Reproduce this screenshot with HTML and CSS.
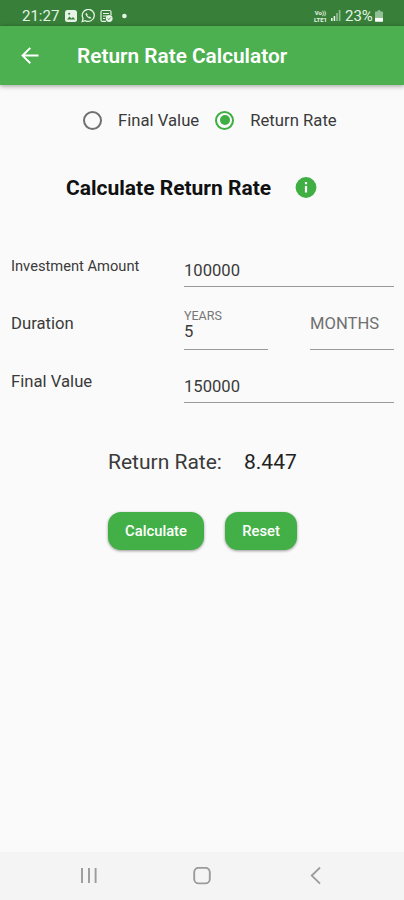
FILE: index.html
```html
<!DOCTYPE html>
<html lang="en">
<head>
  <meta charset="UTF-8" />
  <meta name="viewport" content="width=device-width, initial-scale=1.0"/>
  <title>Return Rate Calculator</title>
  <link rel="stylesheet" href="styles.css">
</head>
<body>
  <div class="status-bar">
    <span class="time">21:27</span>
    <svg class="status-icons" width="64" height="14" viewBox="0 0 64 14">
      <rect x="0" y="1" width="12" height="12" rx="2.5" fill="#e6f3e6"/>
      <path d="M2 10.5l2.5-3 2 2 1.5-1.5 2.3 2.5z" fill="#388039"/>
      <circle cx="4.2" cy="4.7" r="1" fill="#388039"/>
      <path d="M17.2 12.6l.9-3.1a6 6 0 1 1 2.3 2.2z" fill="none" stroke="#e6f3e6" stroke-width="1.3"/>
      <path d="M21.2 3.8c-1 .8-.8 2.3.8 4s3.3 2.3 4.3 1.2l-1.4-1.4-1 .5-1.6-1.7.4-1z" fill="#e6f3e6"/>
      <path d="M41 12.4h-3.5a1.5 1.5 0 0 1-1.5-1.5V3a1.5 1.5 0 0 1 1.5-1.5h7A1.5 1.5 0 0 1 46 3v3M38 4.5h6M38 7h4M38 9.5h2" fill="none" stroke="#e6f3e6" stroke-width="1.2"/>
      <circle cx="44.2" cy="9.5" r="3.4" fill="#e6f3e6"/>
      <path d="M42.7 9.5l1.1 1.1 2-2.1" fill="none" stroke="#388039" stroke-width=".9"/>
      <circle cx="59.4" cy="7" r="2.3" fill="#e6f3e6"/>
    </svg>
    <div class="status-right">
      <div class="volte">
        <span>Vo))</span>
        <span>LTE1</span>
      </div>
      <svg class="signal" width="11" height="11" viewBox="0 0 11 11">
        <path d="M1 8h1.6v3H1zM3.6 6h1.6v5H3.6z" fill="#e6f3e6"/>
        <path d="M6.2 3h1.6v8H6.2zM8.8 0h1.6v11H8.8z" fill="#93bf94"/>
      </svg>
      <span class="percent">23%</span>
      <svg width="8" height="12" viewBox="0 0 9 13">
        <path d="M3 0h3v1.5h2a1 1 0 0 1 1 1V8.5H0v-6a1 1 0 0 1 1-1h2z" fill="#93bf94"/>
        <path d="M0 8.5h9V12a1 1 0 0 1-1 1H1a1 1 0 0 1-1-1z" fill="#fff"/>
      </svg>
    </div>
  </div>

  <div class="app-bar">
    <svg width="18" height="18" viewBox="0 0 18 18">
      <path d="M17.5 8.6H2M9.3 .9L1.6 8.6l7.7 7.7" fill="none" stroke="#fff" stroke-width="2"/>
    </svg>
    <h1>Return Rate Calculator</h1>
  </div>

  <div class="content">
    <div class="radio-group">
      <span class="radio"></span>
      <span class="radio-label">Final Value</span>
      <span class="radio checked"></span>
      <span class="radio-label">Return Rate</span>
    </div>

    <div class="heading">
      <h2>Calculate Return Rate</h2>
      <svg width="22" height="22" viewBox="0 0 22 22">
        <circle cx="11" cy="10.5" r="10.4" fill="#3fae43"/>
        <path d="M9.9 5h2.2v2.2H9.9zM9.9 9h2.2v6.5H9.9z" fill="#fff"/>
      </svg>
    </div>

    <div class="row amount-row">
      <span class="label small">Investment Amount</span>
      <div class="field">100000</div>
    </div>
    <div class="row duration-row">
      <span class="label">Duration</span>
      <div class="field years"><span class="hint">YEARS</span>5</div>
      <div class="field months">MONTHS</div>
    </div>
    <div class="row final-row">
      <span class="label">Final Value</span>
      <div class="field">150000</div>
    </div>

    <div class="result">
      <span class="result-label">Return Rate:</span>
      <span class="result-value">8.447</span>
    </div>

    <div class="buttons">
      <button class="btn calculate">Calculate</button>
      <button class="btn reset">Reset</button>
    </div>
  </div>

  <div class="nav-bar">
    <svg width="18" height="18" viewBox="0 0 18 18">
      <path d="M2 1v15M9 1v15M15.6 1v15" stroke="#9b9b9b" stroke-width="1.9"/>
    </svg>
    <svg width="18" height="18" viewBox="0 0 18 18">
      <rect x="1.2" y=".8" width="15.6" height="15.6" rx="4.5" fill="none" stroke="#9b9b9b" stroke-width="1.9"/>
    </svg>
    <svg width="18" height="18" viewBox="0 0 18 18">
      <path d="M14 .6L5.8 8.6l8.2 8" fill="none" stroke="#9b9b9b" stroke-width="1.9"/>
    </svg>
  </div>
</body>
</html>
```
FILE: styles.css
```css
* {
  box-sizing: border-box;
}

body {
  margin: 0;
  height: 900px;
  display: flex;
  flex-direction: column;
  overflow: hidden;
  font-family: Roboto, sans-serif;
  background-color: #fafafa;
  color: #3a3a3a;
}

svg {
  display: block;
  flex: none;
}

.status-bar {
  display: flex;
  align-items: center;
  height: 26px;
  padding: 5px 21px 0 22px;
  background: #388039;
  color: #e6f3e6;
}

.time {
  width: 43px;
  font-size: 15px;
  line-height: 20px;
}

.status-right {
  display: flex;
  align-items: center;
  margin-left: auto;
}

.volte {
  display: flex;
  flex-direction: column;
  width: 17px;
  font-size: 6px;
  line-height: 7px;
  font-weight: bold;
  text-align: center;
}

.signal {
  margin: 0 4px 0 1px;
}

.percent {
  width: 30px;
  font-size: 15px;
}

.app-bar {
  display: flex;
  align-items: center;
  height: 59px;
  padding: 0 21px;
  background: #4caf50;
  color: #fff;
  box-shadow: 0 1px 5px rgba(0, 0, 0, 0.4);
}

.app-bar h1 {
  margin: 0 0 0 38px;
  font-size: 20.8px;
  font-weight: 600;
}

.content {
  flex: 1;
  padding: 0 10px 0 11px;
}

.radio-group {
  display: flex;
  align-items: center;
  height: 20px;
  margin: 25px 0 0 72px;
}

.radio {
  display: flex;
  align-items: center;
  justify-content: center;
  width: 19px;
  height: 19px;
  margin-right: 16px;
  border: 2px solid #707070;
  border-radius: 50%;
}

.radio.checked {
  margin-left: 16px;
  border-color: #3fae43;
}

.radio.checked::after {
  content: "";
  width: 10px;
  height: 10px;
  flex: none;
  border-radius: 50%;
  background: #3fae43;
}

.radio-label {
  padding-top: 1px;
  font-size: 16.7px;
  white-space: nowrap;
}

.heading {
  display: flex;
  align-items: center;
  height: 24px;
  margin: 46px 0 0 55px;
}

.heading h2 {
  width: 229px;
  margin: 0;
  font-size: 21px;
  font-weight: bold;
  color: #111;
  white-space: nowrap;
}

.row {
  display: grid;
  grid-template-columns: 173px 1fr;
}

.amount-row {
  height: 37px;
  margin-top: 50px;
}

.duration-row {
  grid-template-columns: 173px 84px 84px;
  column-gap: 0;
  height: 43px;
  margin-top: 20px;
}

.final-row {
  height: 33px;
  margin-top: 20px;
}

.label {
  padding-top: 6px;
  font-size: 16.7px;
  line-height: 20px;
}

.label.small {
  font-size: 14.7px;
}

.duration-row .label {
  padding-top: 7px;
}

.final-row .label {
  padding-top: 2px;
}

.field {
  display: flex;
  flex-direction: column;
  justify-content: flex-end;
  padding-bottom: 5px;
  border-bottom: 1px solid #999;
  font-size: 16.6px;
  line-height: 20px;
}

.years {
  padding-bottom: 7px;
}

.hint {
  font-size: 12.5px;
  line-height: 12px;
  color: #777;
}

.months {
  margin-left: 42px;
  width: 84px;
  padding-bottom: 15px;
  color: #707070;
}

.result {
  display: flex;
  height: 26px;
  margin: 46px 0 0 97px;
  font-size: 21px;
  line-height: 26px;
}

.result-label {
  width: 136px;
}

.result-value {
  color: #222;
}

.buttons {
  display: flex;
  gap: 21px;
  margin: 37px 0 0 97px;
}

.btn {
  height: 38px;
  padding: 0;
  border: none;
  border-radius: 13px;
  background: #43b047;
  color: #fff;
  font-family: Roboto, sans-serif;
  font-size: 14.8px;
  font-weight: 500;
  box-shadow: 0 1px 3px rgba(0, 0, 0, 0.4);
}

.calculate {
  width: 96px;
}

.reset {
  width: 72px;
}

.nav-bar {
  display: flex;
  align-items: center;
  justify-content: space-between;
  height: 48px;
  padding: 0 80px;
  background: #f4f4f4;
}
```
